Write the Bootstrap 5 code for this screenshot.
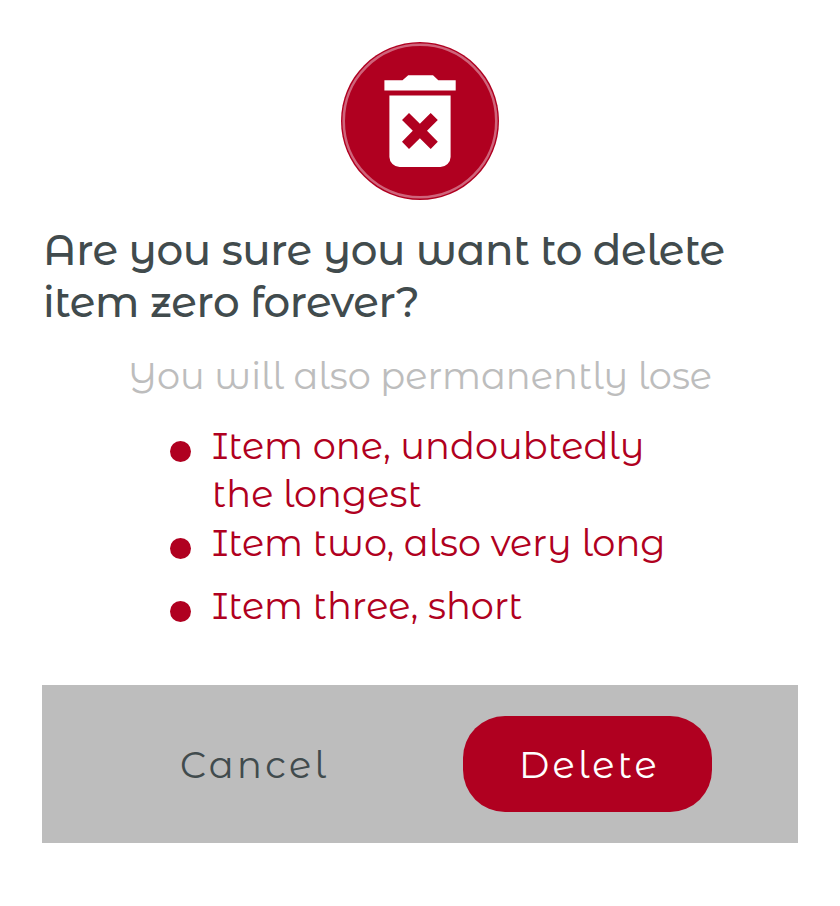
<!DOCTYPE html>
<html lang="en">
<head>
<meta charset="utf-8">
<meta name="viewport" content="width=device-width, initial-scale=1">
<title>Delete item</title>
<link href="https://cdn.jsdelivr.net/npm/bootstrap@5.3.0/dist/css/bootstrap.min.css" rel="stylesheet">
<style>
  :root { --danger-red: #b00020; --slate: #414b4d; --silver: #bdbdbd; }
  body { font-family: "Montserrat Alternates", Inter, Lato, sans-serif; font-weight: 400; font-size: 36.75px; line-height: 48px; background: #fff; }
  .dialog { width: 840px; padding: 42px; }
  .question { color: var(--slate); font-size: 42px; line-height: 52px; font-weight: 500; letter-spacing: -0.43px; margin: 24px 0 24px 1px; }
  .warning { color: var(--silver); margin-bottom: 22px; }
  .losses { color: var(--danger-red); padding-left: 128px; margin-bottom: 55px; }
  .losses li + li { margin-top: 15px; }
  .losses li:nth-child(2) { margin-top: 1px; }
  .dot { width: 21px; height: 21px; margin: 19px 21px 0 0; background: var(--danger-red); }
  .actions { background: var(--silver); height: 158px; padding: 0 86px; }
  .actions .btn { font: inherit; letter-spacing: 0.0892857em; height: 96px; border: 0; padding: 1px 0 0; border-radius: 42px; }
  .btn-keep { width: 253px; color: var(--slate); }
  .actions .btn-remove, .actions .btn-remove:hover { width: 249px; padding-left: 4px; color: #fff; background: var(--danger-red); }
</style>
</head>
<body>
<main class="dialog">
  <div class="d-flex justify-content-center">
    <svg width="158" height="158" viewBox="0 0 158 158" aria-hidden="true">
      <circle cx="79" cy="79" r="79" fill="#b00020"/>
      <circle cx="79" cy="79" r="76.3" fill="none" stroke="#cf647b" stroke-width="2.6"/>
      <path fill="#fff" d="M43.4 38.3H61.5L67.2 33.2H92L97.3 38.3H114.7V48.6H43.4Z"/>
      <path fill="#fff" d="M48.4 53.4H109.6V115A10.2 10.2 0 0 1 99.4 125H58.6A10.2 10.2 0 0 1 48.4 115Z"/>
      <path fill="#b00020" d="M68 71L78.9 81.8L89.7 71L96.8 78L86 88.8L96.8 99.7L89.7 107L78.9 96.2L68 107L61 99.7L71.8 88.8L61 78Z"/>
    </svg>
  </div>
  <h1 class="question text-nowrap">Are you sure you want to delete<br>item zero forever?</h1>
  <p class="warning text-center text-nowrap">You will also permanently lose</p>
  <ul class="losses list-unstyled text-nowrap">
    <li class="d-flex"><span class="dot rounded-circle flex-shrink-0"></span><span>Item one, undoubtedly<br>the longest</span></li>
    <li class="d-flex"><span class="dot rounded-circle flex-shrink-0"></span><span>Item two, also very long</span></li>
    <li class="d-flex"><span class="dot rounded-circle flex-shrink-0"></span><span>Item three, short</span></li>
  </ul>
  <div class="actions d-flex align-items-center justify-content-between">
    <button type="button" class="btn btn-keep">Cancel</button>
    <button type="button" class="btn btn-remove">Delete</button>
  </div>
</main>
<script src="https://cdn.jsdelivr.net/npm/bootstrap@5.3.0/dist/js/bootstrap.bundle.min.js"></script>
</body>
</html>
